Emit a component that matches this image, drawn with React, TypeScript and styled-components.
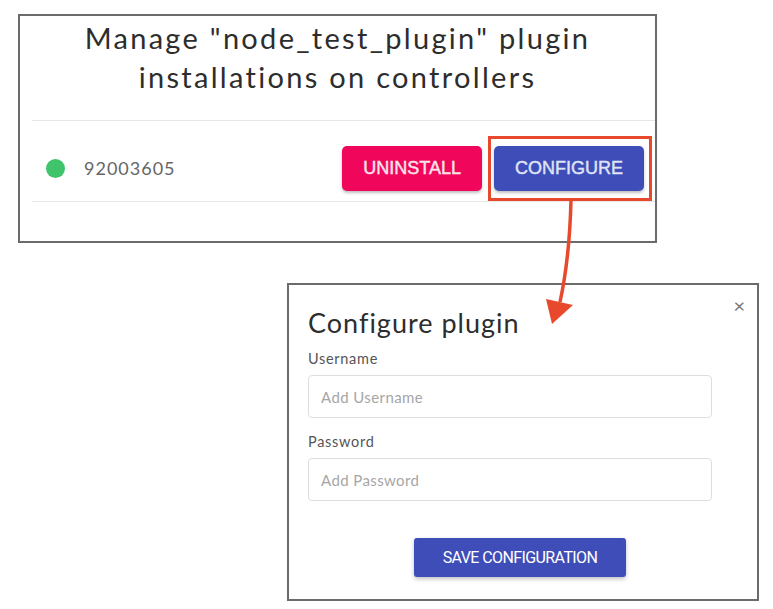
import React from 'react';
import styled, { createGlobalStyle } from 'styled-components';

const GlobalStyle = createGlobalStyle`
  html, body {
    margin: 0;
    padding: 0;
    background: #fff;
  }
  * {
    box-sizing: border-box;
  }
`;

const Canvas = styled.div`
  position: relative;
  width: 773px;
  height: 609px;
  padding: 14px 0 0 18px;
  display: flex;
  flex-direction: column;
  font-family: Lato, 'Noto Sans', sans-serif;
  color: #2b2b2b;
`;

const Shot = styled.section<{ $width: number; $height: number; $offset?: number; $top?: number }>`
  width: ${(p) => p.$width}px;
  height: ${(p) => p.$height}px;
  margin-left: ${(p) => p.$offset || 0}px;
  margin-top: ${(p) => p.$top || 0}px;
  border: 2px solid #6b6b6b;
  background: #fff;
  display: flex;
  flex-direction: column;
`;

const ManageTitle = styled.h1`
  margin: 0;
  padding-top: 2px;
  font-size: 29px;
  font-weight: 400;
  line-height: 39px;
  letter-spacing: 2.3px;
  text-align: center;
  color: #2d2d2d;
`;

const List = styled.div`
  margin: 24px 0 0 12px;
  border-top: 1px solid #e6e6e6;
  border-bottom: 1px solid #e6e6e6;
`;

const Row = styled.div`
  height: 80px;
  display: flex;
  align-items: center;
  padding: 14px 3px 0 14px;
`;

const Status = styled.span`
  width: 19px;
  height: 19px;
  border-radius: 50%;
  background: #3fc46c;
  flex-shrink: 0;
`;

const Serial = styled.span`
  margin-left: 19px;
  font-size: 18px;
  letter-spacing: 1px;
  color: #666;
  flex: 1;
`;

const Actions = styled.div`
  display: flex;
  align-items: center;
  gap: 6px;
`;

const Highlight = styled.div`
  padding: 7px 5px 7px 3px;
  border: 3px solid #e8492c;
  display: flex;
`;

const RowButton = styled.button<{ $tone: 'danger' | 'primary' }>`
  height: 45px;
  padding: 0 21px;
  border: none;
  border-radius: 5px;
  background: ${(p) => (p.$tone === 'danger' ? '#f0075b' : '#3f4db8')};
  color: ${(p) => (p.$tone === 'danger' ? '#fbe3ec' : '#dfe3f6')};
  font-family: 'Liberation Sans', Arial, sans-serif;
  font-size: 18px;
  font-weight: 400;
  -webkit-text-stroke: 0.45px currentColor;
  box-shadow: 0 2px 3px rgba(0, 0, 0, 0.25);
`;

const DialogBody = styled.div`
  position: relative;
  padding: 20px 45px 0 19px;
  display: flex;
  flex-direction: column;
`;

const Close = styled.span`
  position: absolute;
  top: 10px;
  right: 12px;
  font-size: 20px;
  color: #777;
  line-height: 1;
`;

const DialogTitle = styled.h2`
  margin: 0;
  font-size: 27px;
  font-weight: 400;
  line-height: 36px;
  letter-spacing: 1px;
  color: #2d2d2d;
`;

const Field = styled.label<{ $first?: boolean }>`
  display: flex;
  flex-direction: column;
  margin-top: ${(p) => (p.$first ? '9px' : '15px')};
`;

const FieldLabel = styled.span`
  font-size: 14.5px;
  letter-spacing: 0.7px;
  color: #555;
  line-height: 18px;
  margin-bottom: 7px;
`;

const Input = styled.input`
  height: 43px;
  border: 1px solid #dedede;
  border-radius: 4px;
  padding: 0 12px;
  font-family: Lato, 'Noto Sans', sans-serif;
  font-size: 15px;
  letter-spacing: 0.4px;
  color: #333;
  outline: none;

  &::placeholder {
    color: #a6a6a6;
  }
`;

const SaveButton = styled.button`
  align-self: center;
  margin: 37px 0 0 20px;
  width: 212px;
  height: 39px;
  border: none;
  border-radius: 3px;
  background: #3f4db8;
  color: #fff;
  font-family: Roboto, sans-serif;
  font-size: 16px;
  letter-spacing: -0.6px;
  box-shadow: 0 2px 4px rgba(0, 0, 0, 0.25);
`;

const Arrow = styled.svg`
  position: absolute;
  left: 0;
  top: 0;
  pointer-events: none;
`;

export default function App() {
  return (
    <>
      <GlobalStyle />
      <Canvas>
        <Shot $width={639} $height={229}>
          <ManageTitle>
            Manage "node_test_plugin" plugin
            <br />
            installations on controllers
          </ManageTitle>
          <List>
            <Row>
              <Status />
              <Serial>92003605</Serial>
              <Actions>
                <RowButton $tone="danger">UNINSTALL</RowButton>
                <Highlight>
                  <RowButton $tone="primary">CONFIGURE</RowButton>
                </Highlight>
              </Actions>
            </Row>
          </List>
        </Shot>

        <Shot $width={472} $height={318} $offset={269} $top={40}>
          <DialogBody>
            <Close>×</Close>
            <DialogTitle>Configure plugin</DialogTitle>
            <Field $first>
              <FieldLabel>Username</FieldLabel>
              <Input placeholder="Add Username" />
            </Field>
            <Field>
              <FieldLabel>Password</FieldLabel>
              <Input placeholder="Add Password" />
            </Field>
            <SaveButton>SAVE CONFIGURATION</SaveButton>
          </DialogBody>
        </Shot>

        <Arrow width="773" height="609" viewBox="0 0 773 609">
          <path d="M571 200 C570 240 567 270 560 302" stroke="#e8492c" strokeWidth="3.5" fill="none" />
          <polygon points="546,299 573,305 552,324" fill="#e8492c" />
        </Arrow>
      </Canvas>
    </>
  );
}
